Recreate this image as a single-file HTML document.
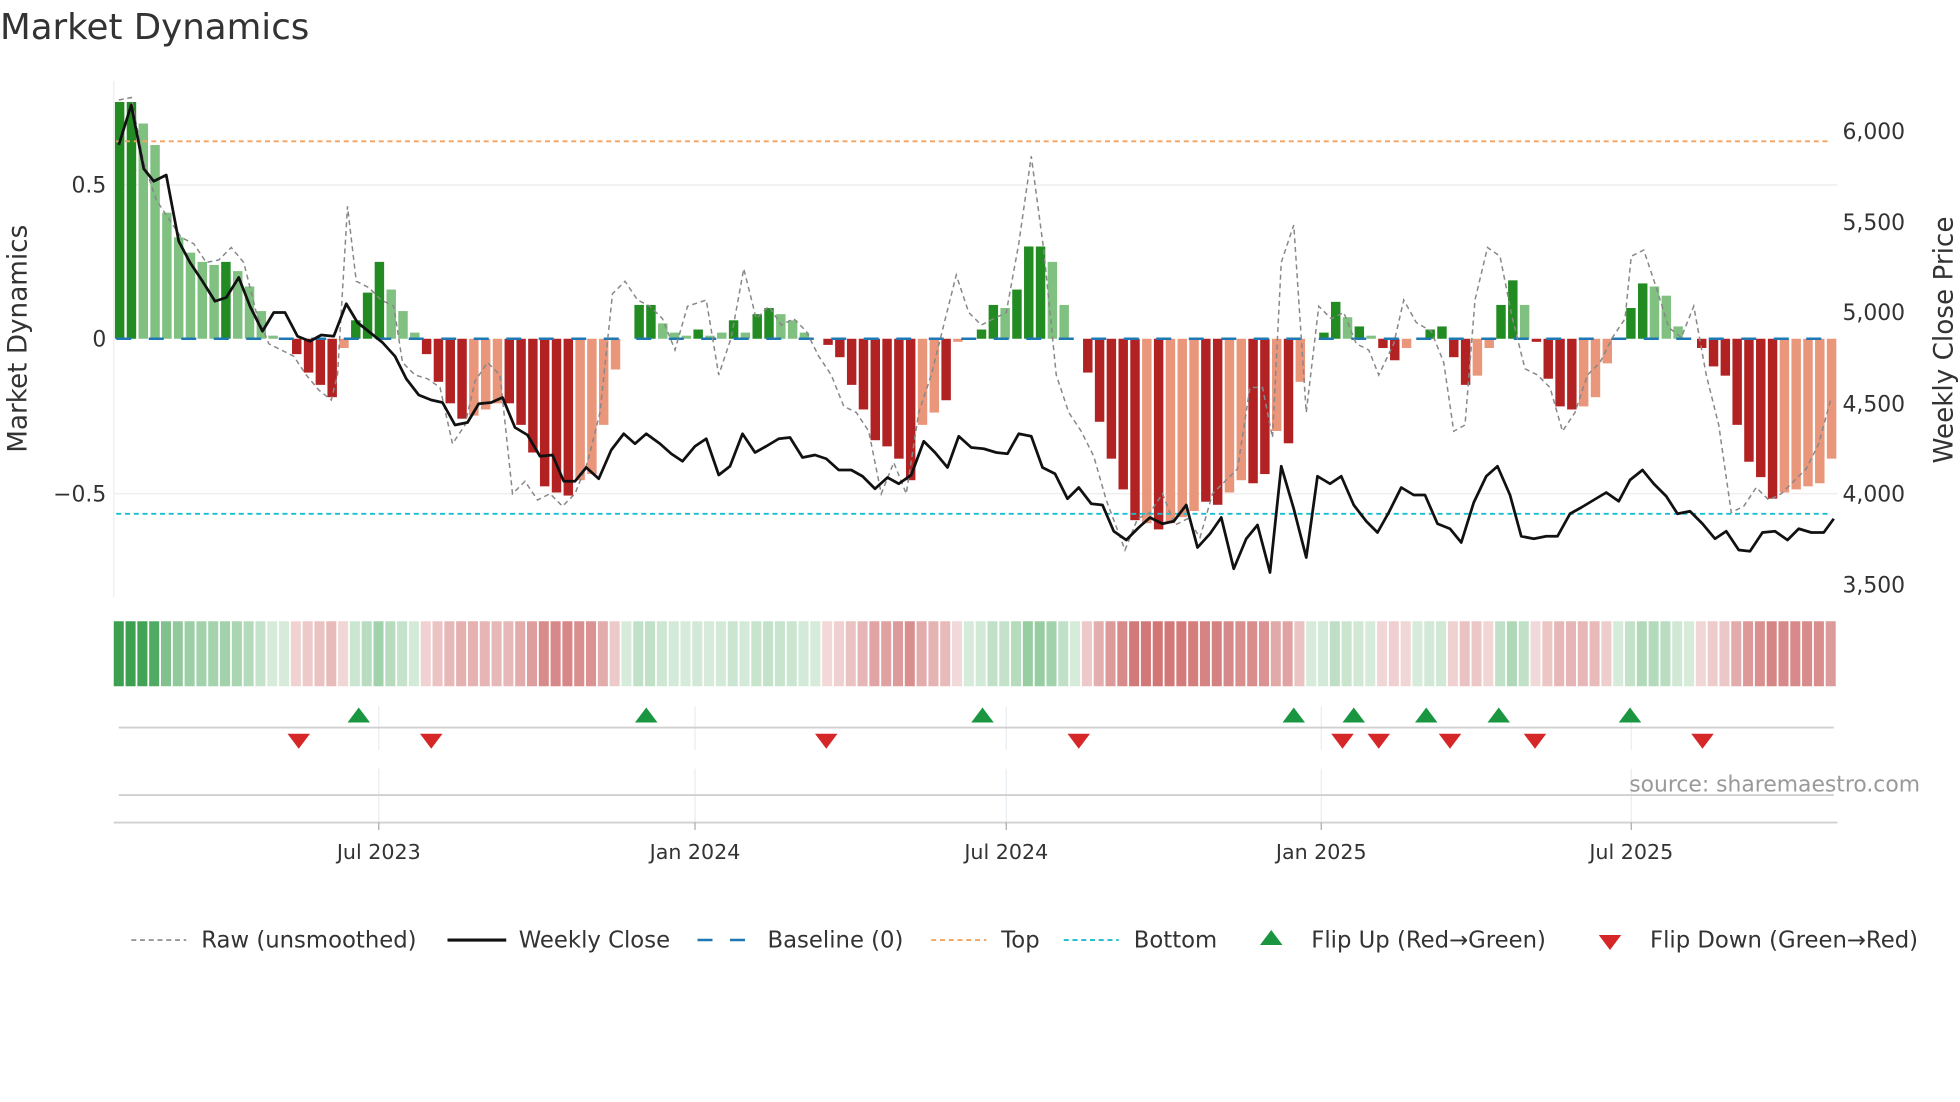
<!DOCTYPE html>
<html><head><meta charset="utf-8">
<style>
html,body{margin:0;padding:0;background:#fff;width:1960px;height:1102px;overflow:hidden}
svg{display:block}
text{font-family:"DejaVu Sans","Liberation Sans",sans-serif;fill:#333}
</style></head>
<body>
<svg id="c" width="1960" height="1102" viewBox="0 0 1568 881.6" xmlns="http://www.w3.org/2000/svg">
<text x="0" y="31" font-size="28.5">Market Dynamics</text>
<g id="grid"></g>
<g id="bars"></g>
<g id="lines"></g>
<g id="strip"></g>
<g id="marks"></g>
<g id="axes"></g>
</svg>
<script>
const NS="http://www.w3.org/2000/svg";
function el(p,t,a,txt){const e=document.createElementNS(NS,t);for(const k in a)e.setAttribute(k,a[k]);if(txt!==undefined)e.textContent=txt;document.getElementById(p).appendChild(e);return e;}
const B=[[.77,1],[.77,1],[.7,0],[.63,0],[.41,0],[.33,0],[.28,0],[.25,0],[.24,0],[.25,1],[.22,0],[.17,0],[.09,0],[.01,0],[0,0],[-.05,1],[-.11,1],[-.15,1],[-.19,1],[-.03,0],[.06,1],[.15,1],[.25,1],[.16,0],[.09,0],[.02,0],[-.05,1],[-.14,1],[-.21,1],[-.26,1],[-.25,0],[-.23,0],[-.21,0],[-.21,1],[-.28,1],[-.37,1],[-.48,1],[-.5,1],[-.51,1],[-.46,0],[-.44,0],[-.28,0],[-.1,0],[0,0],[.11,1],[.11,1],[.05,0],[.02,0],[.01,0],[.03,1],[.01,0],[.02,0],[.06,1],[.02,0],[.08,1],[.1,1],[.08,0],[.06,0],[.02,0],[0,0],[-.02,1],[-.06,1],[-.15,1],[-.23,1],[-.33,1],[-.35,1],[-.39,1],[-.46,1],[-.28,0],[-.24,0],[-.2,1],[-.01,0],[0,0],[.03,1],[.11,1],[.1,0],[.16,1],[.3,1],[.3,1],[.25,0],[.11,0],[0,0],[-.11,1],[-.27,1],[-.39,1],[-.49,1],[-.59,1],[-.6,0],[-.62,1],[-.6,0],[-.58,0],[-.56,0],[-.53,1],[-.54,1],[-.5,0],[-.46,0],[-.47,1],[-.44,1],[-.3,0],[-.34,1],[-.14,0],[0,0],[.02,1],[.12,1],[.07,0],[.04,1],[.01,0],[-.03,1],[-.07,1],[-.03,0],[0,0],[.03,1],[.04,1],[-.06,1],[-.15,1],[-.12,0],[-.03,0],[.11,1],[.19,1],[.11,0],[-.01,1],[-.13,1],[-.22,1],[-.23,1],[-.22,0],[-.19,0],[-.08,0],[0,0],[.1,1],[.18,1],[.17,0],[.14,0],[.04,0],[0,0],[-.03,1],[-.09,1],[-.12,1],[-.28,1],[-.4,1],[-.45,1],[-.52,1],[-.5,0],[-.49,0],[-.48,0],[-.47,0],[-.39,0]];
const X0=91,X1=1470,N=B.length,W=(X1-X0)/N,Z=271,U=246;
el('grid','line',{x1:91,x2:1470,y1:148,y2:148,stroke:'#ebebeb','stroke-width':1});
el('grid','line',{x1:91,x2:1470,y1:395,y2:395,stroke:'#ebebeb','stroke-width':1});
el('grid','line',{x1:91,x2:91,y1:65,y2:478,stroke:'#eeeeee','stroke-width':1});
B.forEach((b,i)=>{const v=b[0];if(Math.abs(v)<0.004)return;const x=X0+i*W+W*0.1,h=Math.abs(v)*U;
let col=v>0?(b[1]?'#228b22':'#80c080'):(b[1]?'#b22222':'#e9967a');
el('bars','rect',{x:x.toFixed(2),y:(v>0?Z-h:Z).toFixed(2),width:(W*0.8).toFixed(2),height:h.toFixed(2),fill:col});
const a=Math.min(1,0.2+Math.abs(v)*1.1);
const sc=v>=0?`rgba(60,160,80,${a})`:`rgba(200,90,90,${Math.min(1,0.22+Math.abs(v)*1.0)})`;
el('strip','rect',{x:(X0+i*W).toFixed(2),y:497,width:(W*0.85).toFixed(2),height:52,fill:sc});
});
B.forEach((b,i)=>{if(Math.abs(b[0])<0.004)el('strip','rect',{x:(X0+i*W).toFixed(2),y:497,width:(W*0.85).toFixed(2),height:52,fill:'rgba(120,190,130,0.3)'});});
el('lines','line',{x1:93,x2:1465,y1:113,y2:113,stroke:'#f4a460','stroke-width':1.5,'stroke-dasharray':'4 3'});
el('lines','line',{x1:93,x2:1465,y1:411,y2:411,stroke:'#17becf','stroke-width':1.5,'stroke-dasharray':'4 3'});
el('lines','line',{x1:93,x2:1465,y1:271,y2:271,stroke:'#1f77b4','stroke-width':2,'stroke-dasharray':'12 14'});
const raw="95,80 105,78 115,130 125,160 135,175 145,190 155,195 165,210 175,208 185,198 195,210 205,250 215,275 225,280 235,285 245,300 255,312 265,320 270,300 278,165 285,225 295,230 305,240 315,245 322,290 332,300 342,303 352,310 362,355 372,340 380,305 390,290 400,300 410,395 420,385 430,400 440,395 450,405 460,395 470,370 480,330 490,235 500,225 510,240 520,245 530,255 540,280 550,245 565,240 575,300 585,270 595,215 605,255 615,245 625,260 635,255 645,265 655,285 665,300 675,325 685,330 695,345 705,395 715,370 725,395 735,330 745,300 755,260 765,220 775,250 785,260 795,255 805,250 815,195 825,125 835,200 845,300 855,330 865,345 875,365 885,400 900,440 910,415 920,410 930,395 940,420 950,415 960,430 970,395 980,385 990,375 1000,310 1010,310 1018,350 1025,210 1035,180 1045,330 1055,245 1065,255 1075,250 1085,275 1095,280 1103,300 1115,275 1123,240 1133,258 1145,265 1155,290 1163,345 1172,340 1180,240 1190,198 1200,205 1210,255 1220,295 1230,300 1240,310 1250,345 1260,330 1270,300 1280,290 1290,270 1300,255 1305,205 1315,200 1325,230 1335,262 1345,270 1355,245 1365,300 1375,340 1385,410 1395,405 1405,390 1415,400 1425,395 1435,385 1445,375 1455,355 1465,318";
el('lines','polyline',{points:raw,fill:'none',stroke:'#888','stroke-width':1.2,'stroke-dasharray':'4 3'});
const px="95,116 105,84 115,135 123,145 133,140 143,193 152,210 162,225 172,241 181,238 191,222 200,245 210,265 219,250 228,250 238,269 248,273 257,268 267,269 277,243 286,258 296,266 306,274 316,285 325,303 335,316 345,320 354,322 364,340 374,338 383,323 393,322 402,318 412,342 422,348 432,365 442,364 451,385 460,385 469,374 479,383 489,360 499,347 508,355 517,347 528,355 537,363 546,369 556,357 565,351 575,380 584,373 594,347 604,362 613,357 623,351 632,350 642,366 652,364 661,367 671,376 681,376 690,381 700,391 710,382 719,387 729,380 739,353 748,362 758,374 767,349 777,358 787,359 797,362 806,363 815,347 825,349 834,374 844,379 854,399 863,390 873,403 882,404 891,425 901,432 911,422 920,414 930,419 939,417 949,404 958,438 968,427 977,414 987,455 997,431 1006,420 1016,458 1025,373 1035,407 1045,446 1054,381 1064,387 1073,381 1083,404 1093,417 1102,426 1111,410 1121,390 1131,396 1140,396 1150,419 1160,423 1169,434 1179,402 1189,381 1198,373 1208,396 1217,429 1227,431 1237,429 1246,429 1256,411 1265,406 1275,400 1285,394 1295,401 1304,384 1314,376 1323,387 1333,397 1342,411 1352,409 1362,419 1372,431 1381,425 1391,440 1400,441 1410,426 1420,425 1430,432 1439,423 1449,426 1459,426 1467,415";
el('lines','polyline',{points:px,fill:'none',stroke:'#111','stroke-width':2.2,'stroke-linejoin':'round'});
[303,556,805,1057,1305].forEach(x=>{el('grid','line',{x1:x,x2:x,y1:565,y2:600,stroke:'#e8eef2','stroke-width':1});el('grid','line',{x1:x,x2:x,y1:615,y2:658,stroke:'#e8eef2','stroke-width':1});});
el('axes','line',{x1:95,x2:1467,y1:582,y2:582,stroke:'#d0d0d0','stroke-width':1.5});
el('axes','line',{x1:95,x2:1467,y1:636,y2:636,stroke:'#d0d0d0','stroke-width':1.5});
el('axes','line',{x1:91,x2:1470,y1:658,y2:658,stroke:'#d0d0d0','stroke-width':1.5});
function up(x,y,g){el(g,'polygon',{points:`${x-9},${y+6} ${x+9},${y+6} ${x},${y-6}`,fill:'#1a9641'});}
function dn(x,y,g){el(g,'polygon',{points:`${x-9},${y-6} ${x+9},${y-6} ${x},${y+6}`,fill:'#d62728'});}
[287,517,786,1035,1083,1141,1199,1304].forEach(x=>up(x,572,'marks'));
[239,345,661,863,1074,1103,1160,1228,1362].forEach(x=>dn(x,593,'marks'));
[[303,'Jul 2023'],[556,'Jan 2024'],[805,'Jul 2024'],[1057,'Jan 2025'],[1305,'Jul 2025']].forEach(t=>{el('axes','line',{x1:t[0],x2:t[0],y1:658,y2:664,stroke:'#aaa','stroke-width':1});el('axes','text',{x:t[0],y:687,'font-size':16.5,'text-anchor':'middle'},t[1]);});
[[154,'0.5'],[277,'0'],[401,'\u22120.5']].forEach(t=>el('axes','text',{x:85,y:t[0],'font-size':17.5,'text-anchor':'end'},t[1]));
[[111,'6,000'],[184,'5,500'],[256,'5,000'],[329,'4,500'],[401,'4,000'],[474,'3,500']].forEach(t=>el('axes','text',{x:1474,y:t[0],'font-size':17.5},t[1]));
el('axes','text',{x:0,y:0,'font-size':21,'text-anchor':'middle',transform:'translate(21,271) rotate(-90)'},'Market Dynamics');
el('axes','text',{x:0,y:0,'font-size':21,'text-anchor':'middle',transform:'translate(1562,272) rotate(-90)'},'Weekly Close Price');
el('axes','text',{x:1536,y:633,'font-size':17.5,'text-anchor':'end',style:'fill:#999'},'source: sharemaestro.com');
const LY=752,FS=18.2;
el('axes','line',{x1:105,x2:149,y1:LY,y2:LY,stroke:'#888','stroke-width':1.3,'stroke-dasharray':'4 3'});
el('axes','text',{x:161,y:LY+6,'font-size':FS},'Raw (unsmoothed)');
el('axes','line',{x1:358,x2:405,y1:LY,y2:LY,stroke:'#111','stroke-width':2.5});
el('axes','text',{x:415,y:LY+6,'font-size':FS},'Weekly Close');
el('axes','line',{x1:558,x2:602,y1:LY,y2:LY,stroke:'#1f77b4','stroke-width':2,'stroke-dasharray':'12 14'});
el('axes','text',{x:614,y:LY+6,'font-size':FS},'Baseline (0)');
el('axes','line',{x1:745,x2:789,y1:LY,y2:LY,stroke:'#f4a460','stroke-width':1.5,'stroke-dasharray':'4 3'});
el('axes','text',{x:801,y:LY+6,'font-size':FS},'Top');
el('axes','line',{x1:851,x2:895,y1:LY,y2:LY,stroke:'#17becf','stroke-width':1.5,'stroke-dasharray':'4 3'});
el('axes','text',{x:907,y:LY+6,'font-size':FS},'Bottom');
up(1017,LY-2,'axes');
el('axes','text',{x:1049,y:LY+6,'font-size':FS},'Flip Up (Red\u2192Green)');
dn(1288,LY+2,'axes');
el('axes','text',{x:1320,y:LY+6,'font-size':FS},'Flip Down (Green\u2192Red)');
</script>
</body></html>
